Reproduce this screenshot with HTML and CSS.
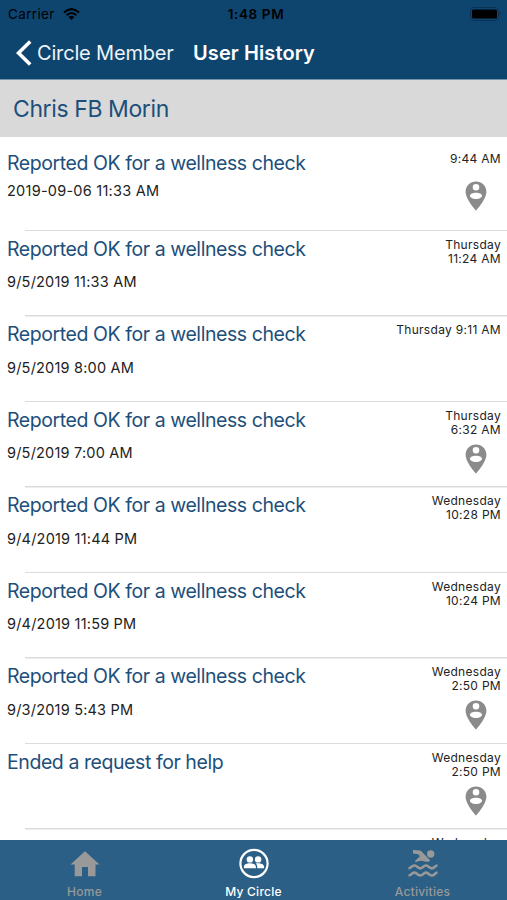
FILE: index.html
```
<!DOCTYPE html>
<html lang="en">
<head>
<meta charset="utf-8">
<title>User History</title>
<link rel="stylesheet" href="styles.css">
</head>
<body>
<svg class="defs" aria-hidden="true">
  <symbol id="pin" viewBox="0 0 22 30">
    <path fill-rule="evenodd" d="M11 .5C5 .5.6 5 .6 10.800C.6 18.500 11 29.700 11 29.700S21.400 18.500 21.400 10.800C21.400 5 17 .5 11 .5ZM11 2.900a3.300 3.300 0 1 1 0 6.600a3.300 3.300 0 0 1 0-6.600ZM11 11.800c3.300 0 6 1.200 6 3s-2.700 3.300-6 3.300s-6-1.500-6-3.300s2.700-3 6-3Z"/>
  </symbol>
</svg>
<div class="app">
  <header class="header">
    <div class="status">
      <div class="carrier"><span>Carrier</span>
        <svg class="wifi" viewBox="0 0 17 12"><path d="M1 4.500Q8.500-2.300 16 4.500M3.600 7.200Q8.500 2.700 13.400 7.200" fill="none" stroke="#000" stroke-width="2"/><path d="M5.600 9Q8.500 6.500 11.400 9L8.500 12Z"/></svg>
      </div>
      <span class="clock">1:48 PM</span>
      <svg class="battery" viewBox="0 0 31 14"><rect x=".5" y=".5" width="28" height="13" rx="3.500" fill="none" stroke="#0a3156"/><rect x="2" y="2.500" width="25" height="9" rx="1.500"/><path d="M29.800 5q2 2 0 4Z" fill="#0a3156"/></svg>
    </div>
    <nav class="nav">
      <svg class="back" viewBox="0 0 16 26"><path d="M14.200 1.500L2.500 13L14.200 24.500" fill="none" stroke="#fff" stroke-width="3.600"/></svg>
      <span class="parent">Circle Member</span>
      <h1 class="heading">User History</h1>
    </nav>
  </header>
  <h2 class="person">Chris FB Morin</h2>
  <main class="list">
    <article class="row first"><div class="event"><h3>Reported OK for a wellness check</h3><p>2019-09-06 11:33 AM</p></div><div class="when"><time>9:44 AM</time><svg class="pin"><use href="#pin"/></svg></div></article>
    <article class="row"><div class="event"><h3>Reported OK for a wellness check</h3><p>9/5/2019 11:33 AM</p></div><div class="when"><time>Thursday<br>11:24 AM</time></div></article>
    <article class="row"><div class="event"><h3>Reported OK for a wellness check</h3><p>9/5/2019 8:00 AM</p></div><div class="when"><time>Thursday 9:11 AM</time></div></article>
    <article class="row"><div class="event"><h3>Reported OK for a wellness check</h3><p>9/5/2019 7:00 AM</p></div><div class="when"><time>Thursday<br>6:32 AM</time><svg class="pin"><use href="#pin"/></svg></div></article>
    <article class="row"><div class="event"><h3>Reported OK for a wellness check</h3><p>9/4/2019 11:44 PM</p></div><div class="when"><time>Wednesday<br>10:28 PM</time></div></article>
    <article class="row"><div class="event"><h3>Reported OK for a wellness check</h3><p>9/4/2019 11:59 PM</p></div><div class="when"><time>Wednesday<br>10:24 PM</time></div></article>
    <article class="row"><div class="event"><h3>Reported OK for a wellness check</h3><p>9/3/2019 5:43 PM</p></div><div class="when"><time>Wednesday<br>2:50 PM</time><svg class="pin"><use href="#pin"/></svg></div></article>
    <article class="row"><div class="event"><h3>Ended a request for help</h3></div><div class="when"><time>Wednesday<br>2:50 PM</time><svg class="pin"><use href="#pin"/></svg></div></article>
    <article class="row last"><div class="event"><h3>Submitted a help alert</h3></div><div class="when"><time>Wednesday</time></div></article>
  </main>
  <footer class="tabs">
    <div class="tab">
      <svg viewBox="0 0 32 32"><path d="M16 3.300L30.500 16.500H26.500V28.200H19V19H13V28.200H5.700V16.500H1.500Z"/></svg>
      <span>Home</span>
    </div>
    <div class="tab active">
      <svg viewBox="0 0 32 32"><circle cx="16" cy="15.500" r="13.600" fill="none" stroke="currentColor" stroke-width="2.200"/><circle cx="11.900" cy="11.400" r="3.200"/><circle cx="20.100" cy="11.400" r="3.200"/><path d="M5.900 20.300v-1.600c0-2.300 3.300-3.400 6-3.400s6 1.100 6 3.400v1.600ZM19.200 20.300v-1.600c0-1.400-.6-2.400-1.500-3.200c.8-.1 1.600-.2 2.400-.2c2.700 0 6 1.100 6 3.400v1.600Z"/></svg>
      <span>My Circle</span>
    </div>
    <div class="tab">
      <svg viewBox="0 0 32 32"><circle cx="23.700" cy="6" r="3.700"/><path d="M6 2L12.800 2.600Q14.200 3 15.300 4.200L23.300 12.600Q21 14.600 18 13.500Q13 11.500 8.500 14.300L8 13L13 8.300L11.200 6.300L6 5.600Z"/><path d="M1.500 20.300c3.200 0 2.700-2.800 5.900-2.800s2.700 2.800 5.800 2.800s2.700-2.800 5.800-2.800s2.700 2.800 5.800 2.800s2.700-2.800 5.700-2.800M1.500 27.500c3.200 0 2.700-2.800 5.900-2.800s2.700 2.800 5.800 2.800s2.700-2.800 5.800-2.800s2.700 2.800 5.800 2.800s2.700-2.800 5.700-2.800" fill="none" stroke="currentColor" stroke-width="2.700"/></svg>
      <span>Activities</span>
    </div>
  </footer>
</div>
</body>
</html>
```
FILE: styles.css
```
* { box-sizing: border-box; margin: 0; }
body { font-family: Inter, "Liberation Sans", sans-serif; background: #fff; color: #222; }
.defs { position: absolute; width: 0; height: 0; }
.app { width: 507px; height: 900px; display: flex; flex-direction: column; overflow: hidden; }
.header { height: 79px; flex: none; background: #0e456f; }
.status { height: 27px; display: grid; grid-template-columns: 1fr auto 1fr; align-items: center; padding: 0 6px 0 8px; color: #000; font-size: 13.500px; }
.carrier { display: flex; align-items: center; gap: 8px; letter-spacing: .35px; }
.wifi { width: 17px; height: 12px; }
.clock { font-weight: 600; letter-spacing: .6px; padding-left: 3px; }
.battery { width: 31px; height: 14px; justify-self: end; }
.nav { height: 51px; display: flex; align-items: center; padding-left: 16px; color: #fff; white-space: nowrap; }
.back { width: 16px; height: 26px; }
.parent { margin-left: 5px; width: 156px; font-size: 20px; letter-spacing: -.17px; color: #edf3f8; }
.heading { font-size: 20px; font-weight: 600; letter-spacing: .1px; }
.person { height: 58px; flex: none; padding: 1px 13px 0; background: #d9d9d9; border-top: 1px solid #7593ab; color: #1d4f7b; font-size: 23px; font-weight: 400; line-height: 56px; letter-spacing: -.4px; }
.list { flex: 1; min-height: 0; overflow: hidden; }
.row { height: 85.500px; display: flex; justify-content: space-between; padding: 4.500px 6px 0 7px; background: linear-gradient(#dcdcdc, #dcdcdc) 25px 100% / 100% 1.500px no-repeat; }
.row.first { height: 94px; padding-top: 12.500px; }
.event h3 { color: #1d4f7b; font-size: 19.500px; font-weight: 400; line-height: 26px; letter-spacing: -.43px; white-space: nowrap; }
.event p { margin-top: 10.500px; font-size: 14.500px; line-height: 20px; letter-spacing: .2px; color: #222; }
.first .event p { margin-top: 5px; letter-spacing: .25px; }
.last .event { padding-top: 1.500px; }
.when { display: flex; flex-direction: column; align-items: flex-end; text-align: right; }
.when time { padding-top: 2px; font-size: 12px; line-height: 14.200px; letter-spacing: .3px; color: #222; }
.pin { width: 22px; height: 30px; margin: 7px 14px 0 0; fill: #8b8b8b; }
.first .pin { margin-top: 15px; }
.tabs { height: 60px; flex: none; display: grid; grid-template-columns: repeat(3, 1fr); background: #2b5f86; color: #999; }
.tab { display: flex; flex-direction: column; align-items: center; padding-top: 8px; font-size: 12px; font-weight: 500; letter-spacing: .25px; }
.tab svg { width: 32px; height: 32px; fill: currentColor; }
.tab span { line-height: 16px; margin-top: 4px; }
.tab.active { color: #fff; }
```
